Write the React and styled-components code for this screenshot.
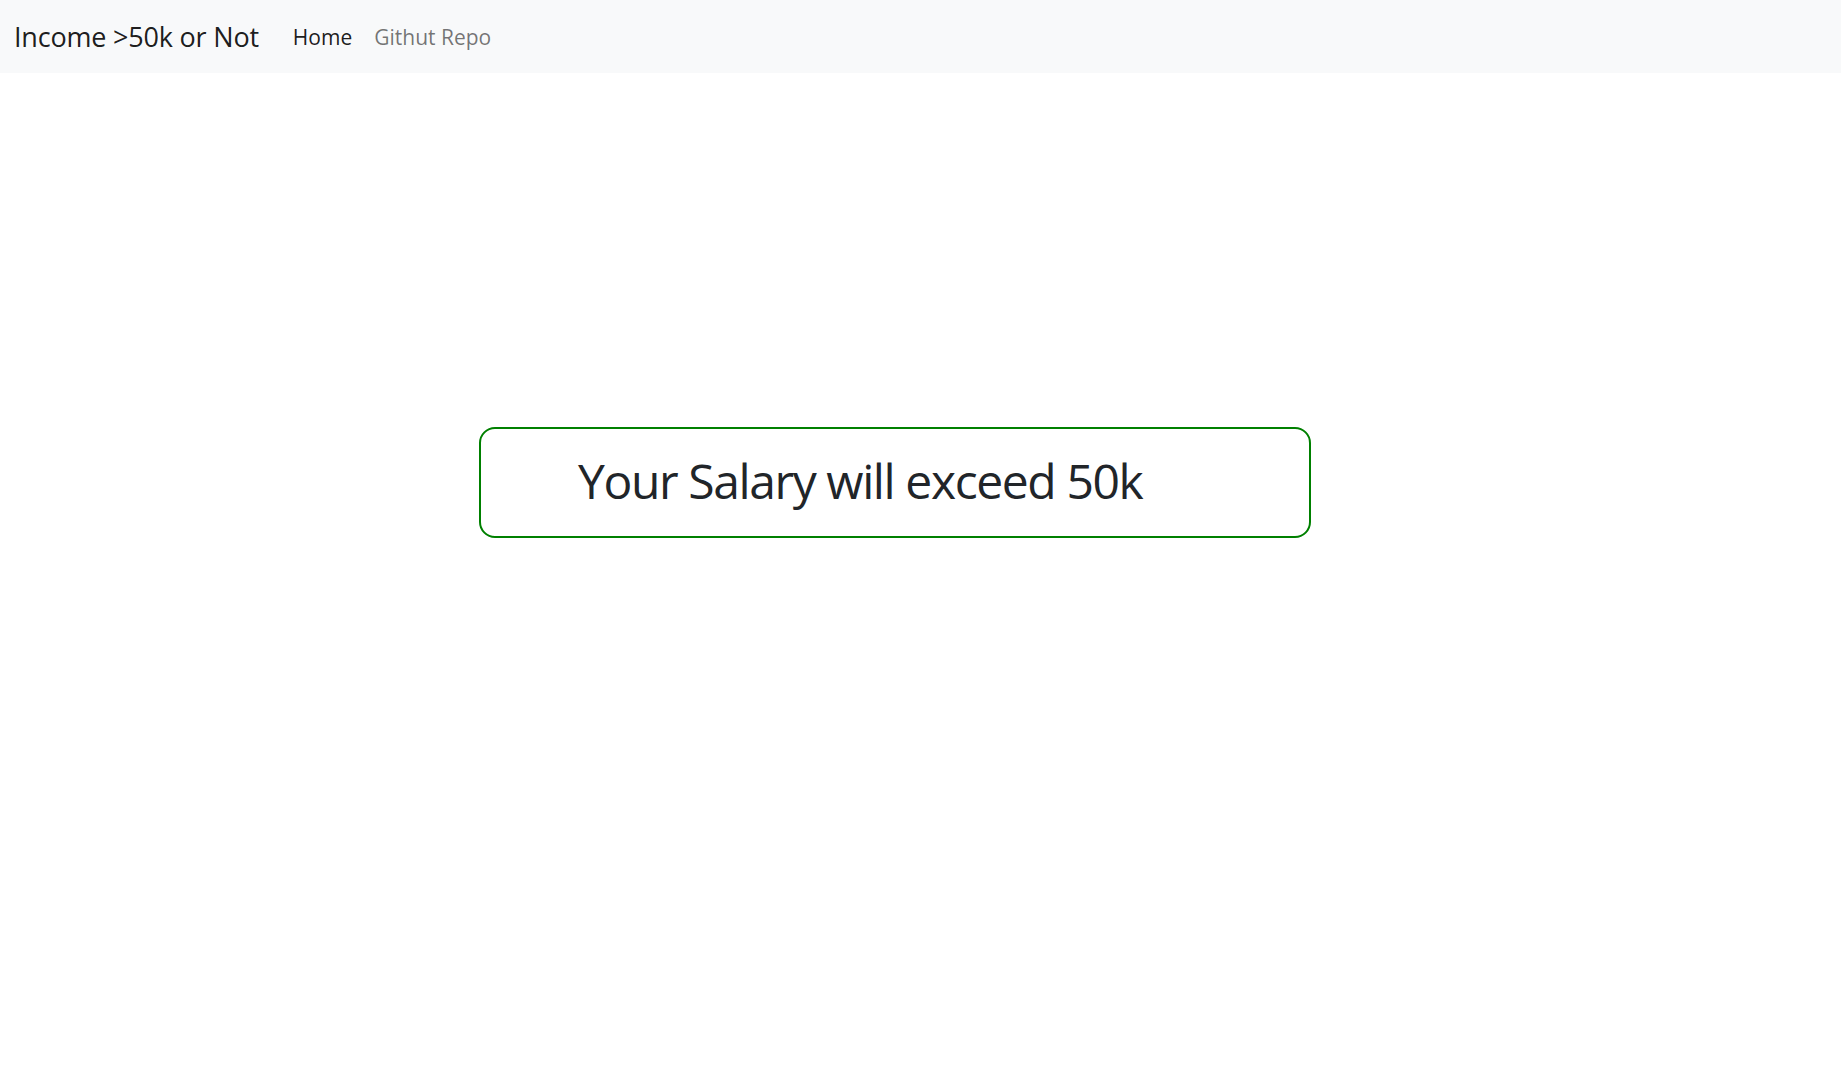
import styled, { createGlobalStyle } from "styled-components";

const GlobalStyle = createGlobalStyle`
  body {
    margin: 0;
    background: #fff;
    font-family: "Open Sans", "Noto Sans", sans-serif;
    color: #212529;
  }
`;

const NavBar = styled.nav`
  display: flex;
  align-items: center;
  height: 73px;
  padding: 0 14px;
  background: #f8f9fa;
`;

const Brand = styled.a`
  font-size: 27px;
  letter-spacing: -0.2px;
  color: rgba(0, 0, 0, 0.9);
  text-decoration: none;
  margin-right: 34px;
`;

const NavLink = styled.a`
  font-size: 21px;
  color: ${(p) => (p.$active ? "rgba(0, 0, 0, 0.9)" : "rgba(0, 0, 0, 0.55)")};
  text-decoration: none;
  margin-right: 22px;
`;

const Main = styled.main`
  display: flex;
  justify-content: flex-start;
  padding: 354px 0 0 479px;
`;

const ResultBox = styled.div`
  box-sizing: border-box;
  width: 832px;
  height: 111px;
  border: 2px solid #008000;
  border-radius: 16px;
  display: flex;
  align-items: center;
  padding: 0 0 4px 97px;
`;

const ResultText = styled.h1`
  margin: 0;
  font-size: 48px;
  font-weight: 400;
  letter-spacing: -1.4px;
  color: #212529;
`;

const App = () => {
  return (
    <>
      <GlobalStyle />
      <NavBar>
        <Brand href="#">Income &gt;50k or Not</Brand>
        <NavLink $active href="#">Home</NavLink>
        <NavLink href="#">Githut Repo</NavLink>
      </NavBar>
      <Main>
        <ResultBox>
          <ResultText>Your Salary will exceed 50k</ResultText>
        </ResultBox>
      </Main>
    </>
  );
};

export default App;
